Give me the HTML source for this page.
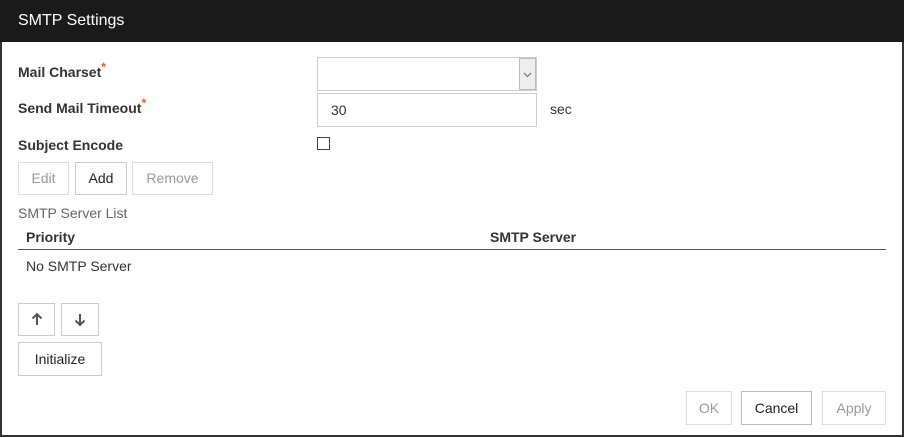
<!DOCTYPE html>
<html><head><style>
*{box-sizing:border-box;margin:0;padding:0}
body{width:904px;height:438px;background:#fff;font-family:"Liberation Sans",sans-serif;font-size:14px;color:#222;position:relative;overflow:hidden}
.frame{position:absolute;left:0;top:0;width:904px;height:437px;border:2px solid #333;border-top:none}
.title{position:absolute;left:0;top:0;width:904px;height:42px;background:#1a1a1a;color:#fff;font-size:16px;padding:12px 0 0 18px}
.a{position:absolute;white-space:nowrap;line-height:16px}
.lbl{font-weight:bold;font-size:14px;color:#333}
.lbl sup{color:#e06020;font-size:12px;line-height:0;vertical-align:6px}
.box{position:absolute;border:1px solid #ccc;background:#fff}
.btn{position:absolute;border:1px solid #ccc;background:#fff;text-align:center;font-size:14px}
.dis{color:#999;border-color:#ddd}
</style></head><body>
<div class="frame"></div>
<div class="title">SMTP Settings</div>
<div class="a lbl" style="left:18px;top:64px">Mail Charset<sup>*</sup></div>
<div class="a lbl" style="left:18px;top:100px">Send Mail Timeout<sup>*</sup></div>
<div class="a lbl" style="left:18px;top:137px">Subject Encode</div>
<div class="box" style="left:317px;top:57px;width:220px;height:34px"></div>
<div class="box" style="left:519px;top:58px;width:17px;height:32px;background:#eee;border-color:#bbb"><svg width="15" height="30" viewBox="0 0 15 30"><path d="M4 14l3.5 3.5L11 14" stroke="#666" fill="none" stroke-width="1"/></svg></div>
<div class="box" style="left:317px;top:93px;width:220px;height:34px;padding:8px 0 0 13px;color:#333">30</div>
<div class="a" style="left:550px;top:101px;color:#333">sec</div>
<div class="box" style="left:317px;top:137px;width:13px;height:13px;border-color:#444"></div>
<div class="btn dis" style="left:18px;top:162px;width:51px;height:33px;line-height:31px">Edit</div>
<div class="btn" style="left:75px;top:162px;width:52px;height:33px;line-height:31px">Add</div>
<div class="btn dis" style="left:132px;top:162px;width:81px;height:33px;line-height:31px">Remove</div>
<div class="a" style="left:18px;top:205px;color:#666">SMTP Server List</div>
<div class="a lbl" style="left:26px;top:229px">Priority</div>
<div class="a lbl" style="left:490px;top:229px">SMTP Server</div>
<div class="a" style="left:18px;top:249px;width:868px;height:1px;background:#555"></div>
<div class="a" style="left:26px;top:258px;color:#333">No SMTP Server</div>
<div class="btn" style="left:18px;top:303px;width:37px;height:33px"><svg width="35" height="31" viewBox="0 0 35 31"><path d="M18 21V10M13.5 14.5L18 10l4.5 4.5" stroke="#555" stroke-width="2" fill="none"/></svg></div>
<div class="btn" style="left:61px;top:303px;width:38px;height:33px"><svg width="36" height="31" viewBox="0 0 36 31"><path d="M18 10v11M13.5 16.5L18 21l4.5-4.5" stroke="#555" stroke-width="2" fill="none"/></svg></div>
<div class="btn" style="left:18px;top:342px;width:84px;height:34px;line-height:32px">Initialize</div>
<div class="btn dis" style="left:686px;top:391px;width:46px;height:34px;line-height:32px">OK</div>
<div class="btn" style="left:741px;top:391px;width:71px;height:34px;line-height:32px;border-color:#bbb">Cancel</div>
<div class="btn dis" style="left:822px;top:391px;width:64px;height:34px;line-height:32px">Apply</div>
</body></html>
